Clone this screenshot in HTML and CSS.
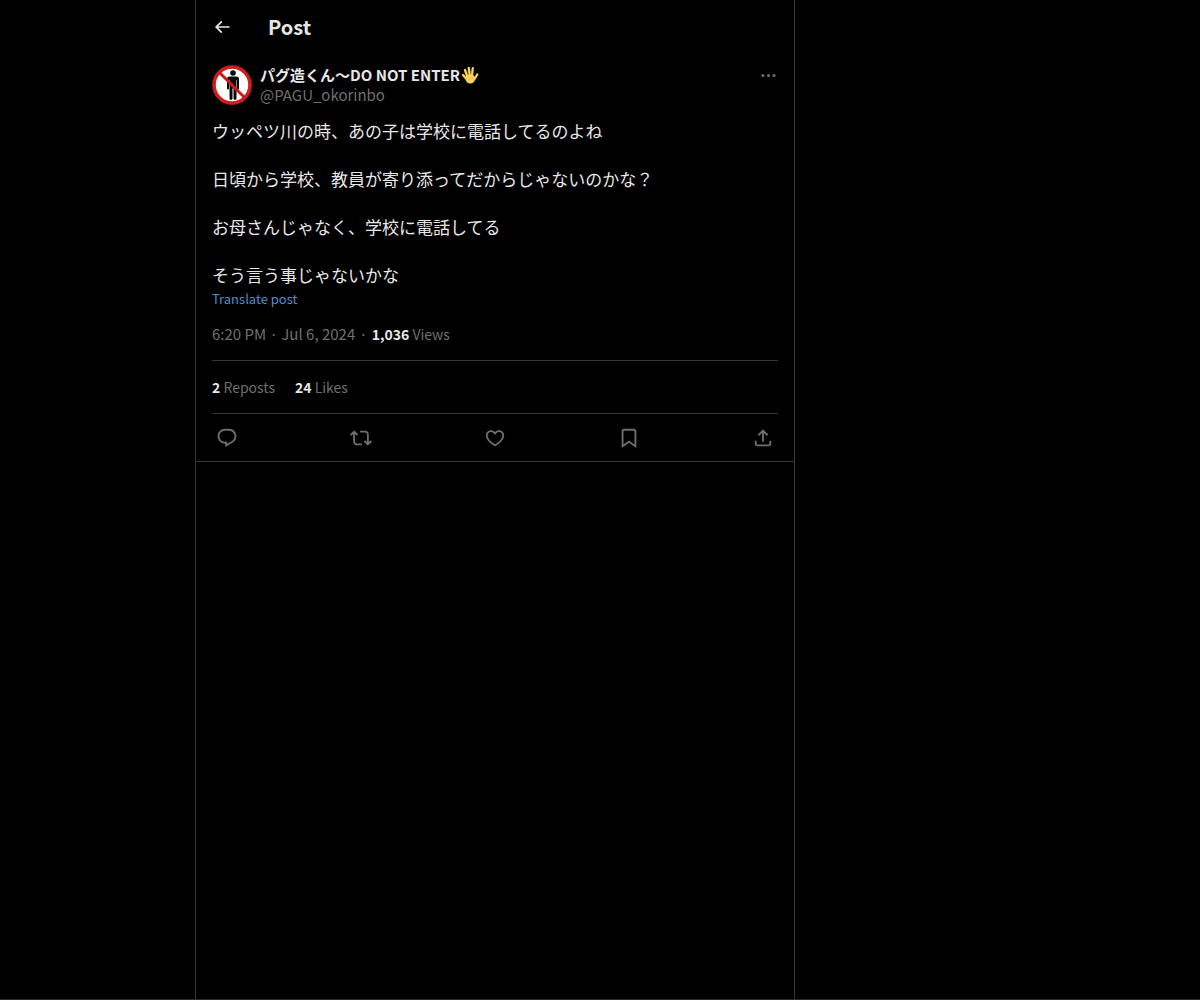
FILE: index.html
```html
<!DOCTYPE html>
<html lang="en">
<head>
<meta charset="utf-8">
<meta name="viewport" content="width=device-width, initial-scale=1">
<title>Post</title>
<link rel="stylesheet" href="styles.css">
</head>
<body>
<div class="page">
  <main class="column">
    <header class="topbar">
      <button class="icon-button" type="button" aria-label="Back">
        <svg class="icon-back" viewBox="0 0 24 24"><path d="M7.414 13l5.043 5.04-1.414 1.42L3.586 12l7.457-7.46 1.414 1.42L7.414 11H21v2H7.414z"/></svg>
      </button>
      <h1 class="title">Post</h1>
    </header>
    <article class="post">
      <div class="author">
        <svg class="avatar" viewBox="0 0 40 40" role="img" aria-label="Profile picture">
          <circle cx="20" cy="20" r="18" fill="#fff" stroke="#d01c1c" stroke-width="3.600"/>
          <g fill="#0c0808">
            <circle cx="21" cy="8" r="2.800"/>
            <path d="M17.500 11.400h7q2.500 0 2.500 2.600v9.400q0 1-1 1t-1-1V15h-.5v18.600q0 1.400-1.500 1.400t-1.500-1.400V23.500h-1v10.100q0 1.400-1.500 1.400t-1.500-1.400V15h-.5v8.400q0 1-1 1t-1-1V14q0-2.600 2.500-2.600z"/>
          </g>
          <path d="M7.200 7.200l25.600 25.600" stroke="#c91b1b" stroke-width="3"/>
        </svg>
        <div class="names">
          <a class="name" href="#profile">パグ造くん〜DO NOT ENTER<svg class="hand" viewBox="0 0 36 36" role="img" aria-label="Raised hand"><g fill="none" stroke="#fbd35c" stroke-width="4.600" stroke-linecap="round"><path d="M13 22L8 8M17.500 19L15.500 4M22 19l1.500-14.500M27 26l5.500-9M12 27L4 18"/></g><path fill="#fbd35c" d="M11 19q7-3 13.500-1l4.500 6q-2 11-10.500 11Q12 35 9.500 28l1-4z"/><path d="M15 27q4-5 9-2M14.800 18l-1.500-7M19.800 17V9" fill="none" stroke="#dc9f35" stroke-width="1.200"/></svg></a>
          <a class="handle" href="#profile">@PAGU_okorinbo</a>
        </div>
        <button class="icon-button more" type="button" aria-label="More">
          <svg class="icon-more" viewBox="0 0 24 24"><path d="M3 12a2 2 0 1 1 4 0 2 2 0 0 1-4 0zm7 0a2 2 0 1 1 4 0 2 2 0 0 1-4 0zm7 0a2 2 0 1 1 4 0 2 2 0 0 1-4 0z"/></svg>
        </button>
      </div>
      <div class="body" lang="ja">
        <p>ウッペツ川の時、あの子は学校に電話してるのよね</p>
        <p>日頃から学校、教員が寄り添ってだからじゃないのかな？</p>
        <p>お母さんじゃなく、学校に電話してる</p>
        <p>そう言う事じゃないかな</p>
      </div>
      <button class="translate" type="button">Translate post</button>
      <div class="meta"><time datetime="2024-07-06T18:20">6:20 PM · Jul 6, 2024</time><span class="dot">·</span><span class="views"><strong>1,036</strong> Views</span></div>
      <div class="stats">
        <a href="#reposts"><strong>2</strong> Reposts</a>
        <a href="#likes"><strong>24</strong> Likes</a>
      </div>
      <div class="actions">
        <button class="icon-button" type="button" aria-label="Reply"><svg class="icon" viewBox="0 0 24 24"><path d="M1.751 10c0-4.420 3.584-8 8.005-8h4.366c4.490 0 8.129 3.640 8.129 8.130 0 2.960-1.607 5.680-4.196 7.110l-8.054 4.460v-3.690h-.067c-4.490.1-8.183-3.510-8.183-8.010zm8.005-6c-3.317 0-6.005 2.690-6.005 6 0 3.370 2.770 6.080 6.138 6.010l.351-.010h1.761v2.300l5.087-2.810c1.951-1.080 3.163-3.130 3.163-5.360 0-3.390-2.744-6.130-6.129-6.130H9.756z"/></svg></button>
        <button class="icon-button" type="button" aria-label="Repost"><svg class="icon" viewBox="0 0 24 24"><path d="M4.500 3.880l4.432 4.140-1.364 1.460L5.500 7.550V16c0 1.100.896 2 2 2H13v2H7.500c-2.209 0-4-1.790-4-4V7.550L1.432 9.480.068 8.020 4.500 3.880zM16.500 6H11V4h5.500c2.209 0 4 1.790 4 4v8.450l2.068-1.930 1.364 1.460-4.432 4.140-4.432-4.140 1.364-1.460 2.068 1.930V8c0-1.100-.896-2-2-2z"/></svg></button>
        <button class="icon-button" type="button" aria-label="Like"><svg class="icon" viewBox="0 0 24 24"><path d="M16.697 5.500c-1.222-.060-2.679.510-3.890 2.160l-.805 1.090-.806-1.090C9.984 6.010 8.526 5.440 7.304 5.500c-1.243.070-2.349.780-2.910 1.910-.552 1.120-.633 2.780.479 4.820 1.074 1.970 3.257 4.270 7.129 6.610 3.870-2.340 6.052-4.640 7.126-6.610 1.111-2.040 1.030-3.700.477-4.820-.561-1.130-1.666-1.840-2.908-1.910zm4.187 7.690c-1.351 2.480-4.001 5.120-8.379 7.670l-.503.300-.504-.300c-4.379-2.550-7.029-5.190-8.382-7.670-1.360-2.500-1.410-4.860-.514-6.670.887-1.790 2.647-2.910 4.601-3.010 1.651-.090 3.368.560 4.798 2.010 1.429-1.450 3.146-2.100 4.796-2.010 1.954.100 3.714 1.220 4.601 3.010.896 1.810.846 4.170-.514 6.670z"/></svg></button>
        <button class="icon-button" type="button" aria-label="Bookmark"><svg class="icon" viewBox="0 0 24 24"><path d="M4 4.500C4 3.120 5.119 2 6.500 2h11C18.881 2 20 3.120 20 4.500v18.440l-8-5.710-8 5.710V4.500zM6.500 4c-.276 0-.5.220-.5.500v14.560l6-4.290 6 4.290V4.500c0-.280-.224-.5-.5-.5h-11z"/></svg></button>
        <button class="icon-button" type="button" aria-label="Share"><svg class="icon" viewBox="0 0 24 24"><path d="M12 2.590l5.700 5.700-1.410 1.420L13 6.410V16h-2V6.410l-3.300 3.300-1.410-1.420L12 2.590zM21 15l-.020 3.510c0 1.380-1.120 2.490-2.500 2.490H5.500C4.110 21 3 19.880 3 18.500V15h2v3.500c0 .280.220.5.500.5h12.980c.280 0 .5-.220.5-.5L19 15h2z"/></svg></button>
      </div>
    </article>
  </main>
</div>
</body>
</html>
```
FILE: styles.css
```css
* {
  box-sizing: border-box;
}

body {
  margin: 0;
  background: #000;
  color: #e7e7e7;
  font-family: "Noto Sans CJK JP", sans-serif;
  font-size: 15px;
  line-height: 20px;
}

a {
  color: inherit;
  text-decoration: none;
}

button {
  padding: 0;
  border: 0;
  background: none;
  color: inherit;
  font: inherit;
  cursor: pointer;
}

svg {
  fill: currentColor;
}

.page {
  display: grid;
  grid-template-columns: 195px minmax(0, 600px) 1fr;
  min-height: 100vh;
  border-bottom: 1px solid #2f2b2b;
}

.column {
  grid-column: 2;
  border: solid #363636;
  border-width: 0 1px;
}

.topbar {
  display: flex;
  align-items: center;
  gap: 36px;
  height: 54px;
  padding: 0 16px;
}

.title {
  margin: 0;
  font-size: 20px;
  line-height: 24px;
}

.icon-button {
  display: flex;
  align-items: center;
  justify-content: center;
}

.icon-back {
  width: 20px;
  height: 20px;
}

.post {
  padding: 11px 16px 0;
  border-bottom: 1px solid #363636;
}

.author {
  display: flex;
  align-items: flex-start;
  gap: 8px;
}

.avatar {
  width: 40px;
  height: 40px;
}

.names {
  display: flex;
  flex: 1;
  flex-direction: column;
}

.name {
  display: flex;
  align-items: center;
  font-weight: 700;
}

.hand {
  width: 18px;
  height: 20px;
  margin-left: 1px;
}

.handle,
.meta,
.stats,
.actions,
.more {
  color: #6f6f6f;
}

.more {
  height: 20px;
}

.icon-more {
  width: 19px;
  height: 19px;
}

.body {
  display: grid;
  gap: 24px;
  margin-top: 14px;
  font-size: 17px;
  line-height: 24px;
}

.body p {
  margin: 0;
}

.translate {
  display: block;
  color: #4a8fd0;
  font-size: 13px;
  line-height: 24px;
}

.meta {
  padding: 13px 0 16px;
  border-bottom: 1px solid #363636;
}

.dot {
  padding: 0 4px;
}

.views,
.stats {
  font-size: 14px;
}

strong {
  color: #e7e7e7;
}

.stats {
  display: flex;
  gap: 20px;
  padding: 16px 0;
  border-bottom: 1px solid #363636;
}

.actions {
  display: flex;
  align-items: center;
  justify-content: space-between;
  height: 47px;
}

.actions .icon-button {
  width: 30px;
}

.icon {
  width: 22px;
  height: 22px;
}
```
